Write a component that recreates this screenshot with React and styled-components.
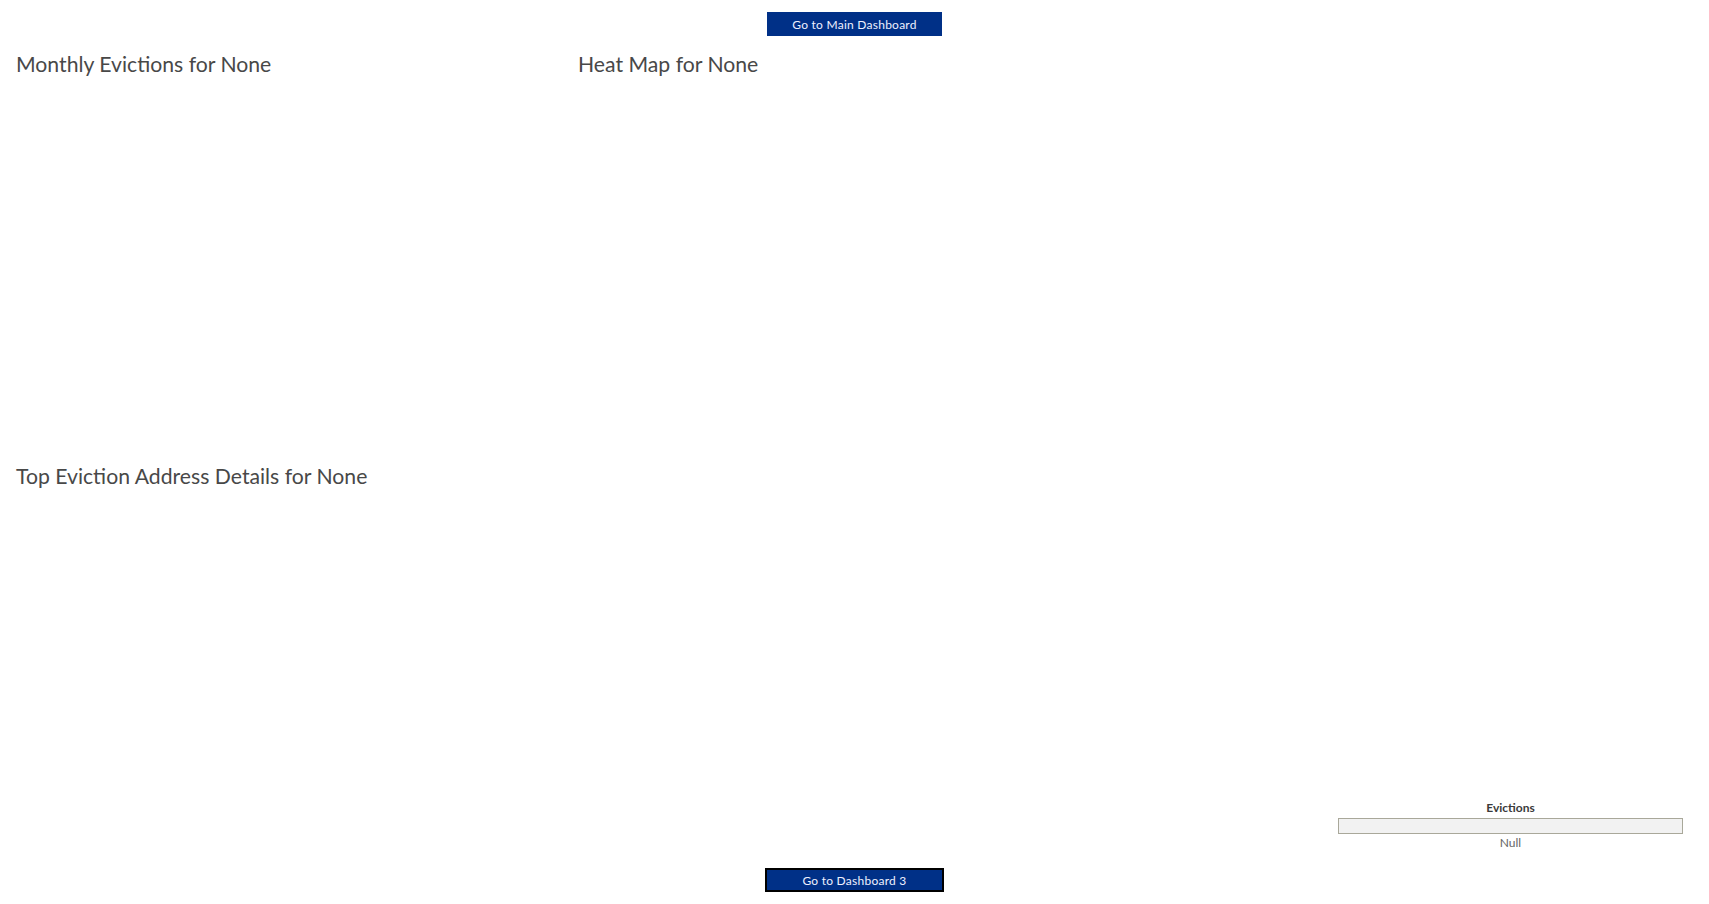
import React from "react";
import styled, { createGlobalStyle } from "styled-components";

const Global = createGlobalStyle`
  html, body { margin: 0; padding: 0; background: #ffffff; }
  body { font-family: "Lato", "Liberation Sans", sans-serif; }
`;

const Page = styled.div`
  width: 1709px;
  height: 904px;
  display: flex;
  flex-direction: column;
  background: #fff;
  overflow: hidden;
`;

const ButtonBar = styled.div`
  display: flex;
  justify-content: center;
  align-items: flex-start;
  height: ${(p) => p.$h}px;
  padding-top: ${(p) => p.$pt}px;
  box-sizing: border-box;
  flex: none;
`;

const NavButton = styled.button`
  width: ${(p) => p.$w}px;
  height: 24px;
  box-sizing: border-box;
  background: #003087;
  color: #eef0ff;
  border: ${(p) => (p.$outlined ? "2px solid #000" : "none")};
  font-family: "Lato", "Liberation Sans", sans-serif;
  font-size: 12px;
  letter-spacing: 0.25px;
  padding: 0;
  display: flex;
  align-items: center;
  justify-content: center;
  cursor: pointer;
`;

const Upper = styled.div`
  display: flex;
  height: 414px;
  flex: none;
`;

const Pane = styled.section`
  width: ${(p) => (p.$w ? `${p.$w}px` : "auto")};
  flex: ${(p) => (p.$w ? "none" : "1")};
  padding: 3px 0 0 ${(p) => p.$pl}px;
  box-sizing: border-box;
  display: flex;
  flex-direction: column;
`;

const Title = styled.h2`
  margin: 0;
  font-family: "Lato", "Liberation Sans", sans-serif;
  font-weight: 400;
  font-size: 21.2px;
  line-height: 26px;
  color: #484848;
  letter-spacing: 0;
`;

const Lower = styled.div`
  flex: 1;
  display: flex;
  flex-direction: column;
  padding: 1px 0 0 16px;
`;

const LowerBody = styled.div`
  flex: 1;
  display: flex;
  justify-content: flex-end;
  align-items: flex-end;
  padding-right: 26px;
`;

const Legend = styled.div`
  width: 345px;
  display: flex;
  flex-direction: column;
  align-items: center;
  margin-bottom: 6px;
`;

const LegendTitle = styled.div`
  font-family: "Lato", "Liberation Sans", sans-serif;
  font-size: 12px;
  font-weight: 700;
  color: #3a3a3a;
  line-height: 15px;
  margin-bottom: 3px;
`;

const LegendBar = styled.div`
  width: 100%;
  height: 16px;
  box-sizing: border-box;
  background: #f2f2f2;
  border: 1px solid #a9a89a;
`;

const LegendLabel = styled.div`
  font-family: "Lato", "Liberation Sans", sans-serif;
  font-size: 12px;
  color: #666;
  line-height: 15px;
  margin-top: 1px;
`;

export default function App() {
  return (
    <>
      <Global />
      <Page>
        <ButtonBar $h={48} $pt={12}>
          <NavButton $w={175}>Go to Main Dashboard</NavButton>
        </ButtonBar>
        <Upper>
          <Pane $w={561} $pl={16}>
            <Title>Monthly Evictions for None</Title>
          </Pane>
          <Pane $pl={17}>
            <Title>Heat Map for None</Title>
          </Pane>
        </Upper>
        <Lower>
          <Title>Top Eviction Address Details for None</Title>
          <LowerBody>
            <Legend>
              <LegendTitle>Evictions</LegendTitle>
              <LegendBar />
              <LegendLabel>Null</LegendLabel>
            </Legend>
          </LowerBody>
        </Lower>
        <ButtonBar $h={48} $pt={12}>
          <NavButton $w={179} $outlined>Go to Dashboard 3</NavButton>
        </ButtonBar>
      </Page>
    </>
  );
}
